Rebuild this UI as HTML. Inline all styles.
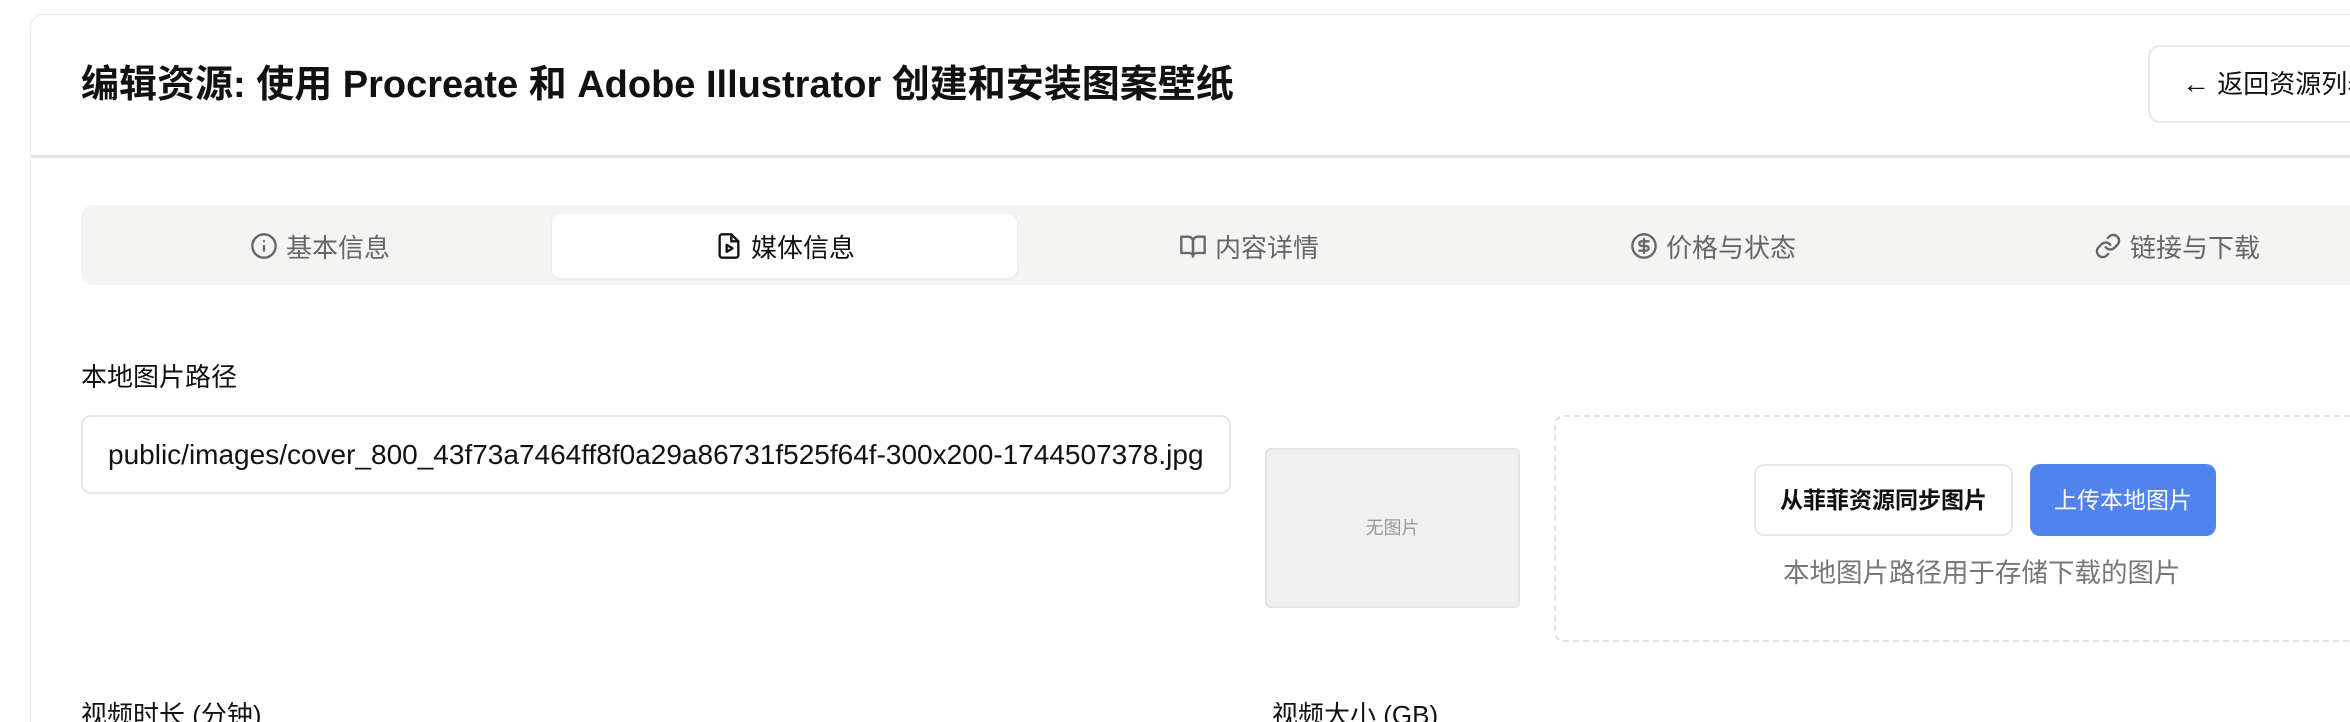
<!DOCTYPE html>
<html style="overflow:hidden;height:722px"><head><meta charset="utf-8"><style>
*{box-sizing:border-box;margin:0;padding:0}
body{width:2350px;height:722px;overflow:hidden;background:#fff;font-family:"Liberation Sans","Noto Sans CJK SC",sans-serif;color:#111;position:relative}
.card{position:absolute;left:30px;top:14px;width:2400px;height:720px;border:1px solid #ececec;border-bottom:none;border-radius:14px 14px 0 0;background:#fff}
.a{position:absolute;white-space:nowrap}
.hdr{position:absolute;left:31px;top:155px;width:2330px;height:3px;background:#e6e6e6}
.tabs{position:absolute;left:81px;top:205px;width:2300px;height:80px;background:#f4f4f3;border-radius:12px}
.act{position:absolute;left:552px;top:214px;width:465px;height:64px;background:#fff;border-radius:9px;box-shadow:0 1px 3px rgba(0,0,0,.08)}
.tab{position:absolute;top:229px;height:34px;font-size:26px;color:#666;display:flex;align-items:center;gap:8px;transform:translateX(-50%)}
.tab svg{width:28px;height:28px;fill:none;stroke:currentColor;stroke-width:2;stroke-linecap:round;stroke-linejoin:round}
</style></head><body>
<div class="card"></div>
<div class="a" style="left:81px;top:62px;font-size:38px;font-weight:bold;line-height:46px">编辑资源: 使用 Procreate 和 Adobe Illustrator 创建和安装图案壁纸</div>
<div class="a" style="left:2148px;top:45px;width:260px;height:78px;border:2px solid #e6e6e6;border-radius:12px;background:#fff"></div>
<div class="a" style="left:2182px;top:67px;font-size:26px;line-height:34px"><span style="font-size:28px">←</span> 返回资源列表</div>
<div class="hdr"></div>
<div class="tabs"></div>
<div class="act"></div>
<div class="tab" style="left:320px"><svg viewBox="0 0 24 24"><circle cx="12" cy="12" r="10"/><path d="M12 16v-4M12 8h.01"/></svg>基本信息</div>
<div class="tab" style="left:785px;color:#111"><svg viewBox="0 0 24 24"><path d="M14 2H6a2 2 0 0 0-2 2v16a2 2 0 0 0 2 2h12a2 2 0 0 0 2-2V8z"/><path d="M14 2v6h6"/><path d="M10 11v6l5-3z"/></svg>媒体信息</div>
<div class="tab" style="left:1249px"><svg viewBox="0 0 24 24"><path d="M2 4h6a4 4 0 0 1 4 4v13a3 3 0 0 0-3-3H2z"/><path d="M22 4h-6a4 4 0 0 0-4 4v13a3 3 0 0 1 3-3h7z"/></svg>内容详情</div>
<div class="tab" style="left:1713px"><svg viewBox="0 0 24 24"><circle cx="12" cy="12" r="10"/><path d="M16 8h-6a2 2 0 1 0 0 4h4a2 2 0 1 1 0 4H8M12 18V6"/></svg>价格与状态</div>
<div class="tab" style="left:2177px"><svg viewBox="0 0 24 24"><path d="M10 13a5 5 0 0 0 7.5.5l3-3a5 5 0 0 0-7-7l-1.7 1.7"/><path d="M14 11a5 5 0 0 0-7.5-.5l-3 3a5 5 0 0 0 7 7l1.7-1.7"/></svg>链接与下载</div>
<div class="a" style="left:81px;top:360px;font-size:26px;line-height:34px">本地图片路径</div>
<div class="a" style="left:81px;top:415px;width:1150px;height:79px;border:2px solid #e6e6e6;border-radius:10px;overflow:hidden;padding-left:25px;font-size:28px;line-height:75px">public/images/cover_800_43f73a7464ff8f0a29a86731f525f64f-300x200-1744507378.jpg</div>
<div class="a" style="left:1265px;top:448px;width:255px;height:160px;background:#f0f0f0;border:2px solid #e3e3e3;border-radius:5px;font-size:18px;color:#999;text-align:center;line-height:156px">无图片</div>
<div class="a" style="left:1554px;top:415px;width:830px;height:227px;border:2px dashed #e2e2e2;border-radius:10px"></div>
<div class="a" style="left:1754px;top:464px;width:259px;height:72px;border:2px solid #e6e6e6;border-radius:10px;font-size:23px;font-weight:bold;text-align:center;line-height:68px">从菲菲资源同步图片</div>
<div class="a" style="left:2030px;top:464px;width:186px;height:72px;background:#5083ee;border-radius:10px;font-size:23px;color:#fff;text-align:center;line-height:72px">上传本地图片</div>
<div class="a" style="left:1783px;top:556px;font-size:26.5px;color:#777;line-height:34px">本地图片路径用于存储下载的图片</div>
<div class="a" style="left:81px;top:698px;font-size:26px;line-height:34px">视频时长 (分钟)</div>
<div class="a" style="left:1272px;top:698px;font-size:26px;line-height:34px">视频大小 (GB)</div>
</body></html>
